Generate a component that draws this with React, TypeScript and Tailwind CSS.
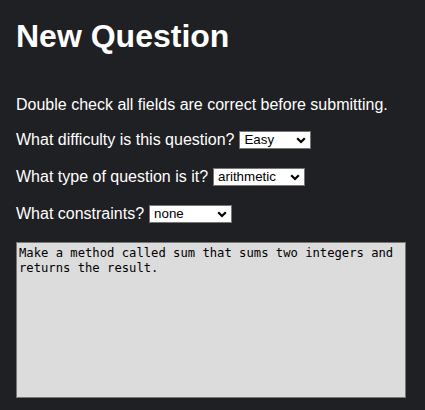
import React from "react";

function Chevron() {
  return (
    <svg
      width="10"
      height="7"
      viewBox="0 0 10 7"
      className="pointer-events-none absolute right-[5px] top-[6px]"
    >
      <polyline points="1.2,1.2 5,5 8.8,1.2" fill="none" stroke="#000" strokeWidth="2.2" />
    </svg>
  );
}

function Select({ value, options, width }: { value: string; options: string[]; width: string }) {
  return (
    <span className={`relative inline-block h-[18px] ${width}`}>
      <select
        defaultValue={value}
        className="block h-[18px] w-full appearance-none rounded-none border border-[#767676] bg-white pl-[4px] pr-[16px] font-['Liberation_Sans',Arial,sans-serif] text-[13.33px] leading-[16px] text-black outline-none"
      >
        {options.map((o) => (
          <option key={o} value={o}>
            {o}
          </option>
        ))}
      </select>
      <Chevron />
    </span>
  );
}

export default function App() {
  return (
    <div className="min-h-[410px] w-full bg-[#1f2023] px-4 pt-[18px] pb-[13px] font-['Liberation_Sans',Arial,sans-serif] text-white">
      <h1 className="text-[32px] font-bold leading-[37px]">New Question</h1>
      <p className="mt-[41px] text-base leading-[18px]">
        Double check all fields are correct before submitting.
      </p>
      <div className="mt-[17px] flex h-[18px] items-center gap-[5px] text-base leading-[18px]">
        <span>What difficulty is this question?</span>
        <Select value="Easy" options={["Easy", "Medium", "Hard"]} width="w-[72px]" />
      </div>
      <div className="mt-[19px] flex h-[18px] items-center gap-[5px] text-base leading-[18px]">
        <span>What type of question is it?</span>
        <Select value="arithmetic" options={["arithmetic", "strings", "arrays"]} width="w-[92px]" />
      </div>
      <div className="mt-[19px] flex h-[18px] items-center gap-[5px] text-base leading-[18px]">
        <span>What constraints?</span>
        <Select value="none" options={["none", "no loops", "recursion"]} width="w-[83px]" />
      </div>
      <textarea
        defaultValue="Make a method called sum that sums two integers and returns the result."
        className="mt-[19px] block h-[156px] w-[390px] resize-none rounded-none border border-[#767676] bg-[#dcdcdc] px-[2px] pt-[3px] font-['DejaVu_Sans_Mono',monospace] text-[12.2px] leading-[15px] text-black outline-none"
      />
    </div>
  );
}
